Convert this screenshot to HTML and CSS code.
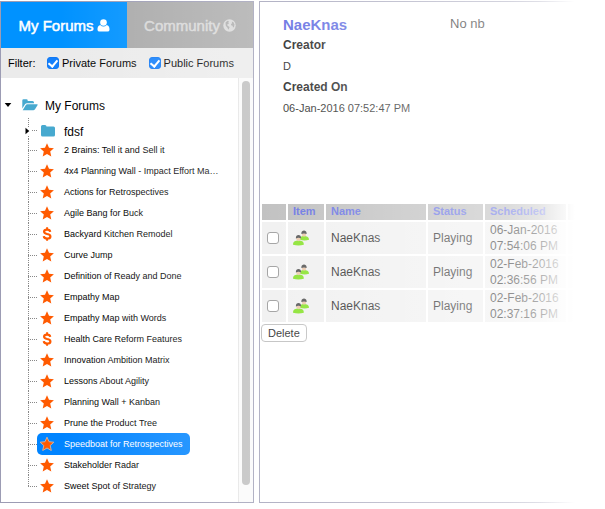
FILE: index.html
```html
<!DOCTYPE html>
<html lang="en">
<head>
<meta charset="utf-8">
<title>My Forums</title>
<link rel="stylesheet" href="styles.css">
</head>
<body>
<svg class="defs" aria-hidden="true">
  <symbol id="star" viewBox="0 0 14 14"><path d="M7 .2 9 4.700l4.900.5-3.700 3.300 1.100 5L7 11l-4.300 2.500 1.100-5L.1 5.200 5 4.700Z"/></symbol>
  <symbol id="dollar" viewBox="0 0 14 14"><path d="M10.200 4.800C10 3.300 8.800 2.600 7.100 2.600 5.300 2.600 4.100 3.400 4.100 4.700 4.100 6.200 5.600 6.600 7.200 7 9 7.400 10.400 7.900 10.400 9.400 10.400 10.800 9 11.500 7.200 11.500 5.300 11.500 3.900 10.700 3.800 9.100" fill="none" stroke="currentColor" stroke-width="2.200"/><path d="M7.100.3V2.800M7.100 11.300V13.800" stroke="currentColor" stroke-width="2"/></symbol>
  <symbol id="people" viewBox="0 0 16 16">
    <path d="M6.500 9.800C6.500 6.800 8.500 6 11 6s5 .8 5 3.800Q12 11.300 6.500 9.800Z" fill="#6fdc00"/>
    <path d="M8.700 3.500Q8.700 6.400 11 6.800 13.300 6.400 13.300 3.500Z" fill="#e8bd98"/>
    <path d="M8.400 4C7.800-.6 14.200-.6 13.600 4Q11 2.800 8.400 4Z" fill="#303030"/>
    <path d="M0 14.700C0 11.300 2.300 10.500 5.500 10.500s5.300.8 5.300 4.200Q5.500 16.300 0 14.700Z" fill="#6fdc00"/>
    <path d="M3.200 8Q3.200 10.900 5.500 11.300 7.800 10.900 7.800 8Z" fill="#e8bd98"/>
    <path d="M2.900 8.400C2.300 3.800 8.700 3.800 8.100 8.400Q5.500 7.200 2.900 8.400Z" fill="#303030"/>
  </symbol>
</svg>
<main class="app">
  <section class="forums">
    <nav class="tabs">
      <button class="tab tab-active" type="button">My Forums
        <svg class="tab-icon" viewBox="0 0 13 13" aria-hidden="true"><circle cx="6.500" cy="3.500" r="3.300"/><path d="M3.200 6Q6.500 9 9.800 6C12 6.500 12.600 8.500 12.500 11Q12.300 12.600 10.500 12.600H2.500Q.7 12.600.5 11C.4 8.500 1 6.500 3.200 6Z"/></svg>
      </button>
      <button class="tab" type="button">Community
        <svg class="tab-icon" viewBox="0 0 13 13" aria-hidden="true"><circle cx="6.500" cy="6.500" r="6.200"/><path d="M2.500 3.500 4.500 1.800 6 2.200 5.200 3.200 6 4.200 4.600 5.400 3.800 5.800 5 7 6.600 8 6.200 9.300 5.300 10.800 4.500 8.800 2.800 6.800ZM8.800 2.800l1.500.2 1.200 2.500-.5 2.500-1 .5-.4-1.700-1.500-.5-.1-1.400 1.200-.6Z" class="land"/></svg>
      </button>
    </nav>
    <form class="filter">
      <span class="filter-title">Filter:</span>
      <label class="choice"><input class="check" type="checkbox" checked>Private Forums</label>
      <label class="choice"><input class="check" type="checkbox" checked>Public Forums</label>
    </form>
    <div class="browser">
      <div class="tree">
        <div class="root">
          <svg class="caret" viewBox="0 0 8 8" aria-hidden="true"><path d="M.7 2H7.300L4 6Z"/></svg>
          <svg class="folder" viewBox="0 0 16 14" aria-hidden="true"><path d="M.3 10.500V2.500Q.3 1.300 1.500 1.300H4.500Q5.700 1.300 5.700 2.500V3H10.500Q12 3 12 4.500V5.300H5Q3.800 5.300 3 6.300ZM.7 12.300 3.700 7.200Q4.300 6.300 5.300 6.300H15.200Q16 6.300 15.500 7.200L13 11.300Q12.300 12.300 11.300 12.300Z"/></svg>
          <span>My Forums</span>
        </div>
        <ul class="branch">
          <li class="row row-folder">
            <svg class="caret caret-closed" viewBox="0 0 8 8" aria-hidden="true"><path d="M2.500.8V7.200L6.300 4Z"/></svg>
            <svg class="folder folder-closed" viewBox="0 0 16 14" aria-hidden="true"><path d="M1 2.500Q1 1 2.500 1H5Q6.500 1 6.500 2.500H13.500Q15 2.500 15 4V11Q15 12.500 13.500 12.500H2.500Q1 12.500 1 11Z"/></svg>
            <span>fdsf</span>
          </li>
          <li class="row"><a class="leaf" href="#"><svg class="mark"><use href="#star"/></svg><span class="name">2 Brains: Tell it and Sell it</span></a></li>
          <li class="row"><a class="leaf" href="#"><svg class="mark"><use href="#star"/></svg><span class="name">4x4 Planning Wall - Impact Effort Ma…</span></a></li>
          <li class="row"><a class="leaf" href="#"><svg class="mark"><use href="#star"/></svg><span class="name">Actions for Retrospectives</span></a></li>
          <li class="row"><a class="leaf" href="#"><svg class="mark"><use href="#star"/></svg><span class="name">Agile Bang for Buck</span></a></li>
          <li class="row"><a class="leaf" href="#"><svg class="mark"><use href="#dollar"/></svg><span class="name">Backyard Kitchen Remodel</span></a></li>
          <li class="row"><a class="leaf" href="#"><svg class="mark"><use href="#star"/></svg><span class="name">Curve Jump</span></a></li>
          <li class="row"><a class="leaf" href="#"><svg class="mark"><use href="#star"/></svg><span class="name">Definition of Ready and Done</span></a></li>
          <li class="row"><a class="leaf" href="#"><svg class="mark"><use href="#star"/></svg><span class="name">Empathy Map</span></a></li>
          <li class="row"><a class="leaf" href="#"><svg class="mark"><use href="#star"/></svg><span class="name">Empathy Map with Words</span></a></li>
          <li class="row"><a class="leaf" href="#"><svg class="mark"><use href="#dollar"/></svg><span class="name">Health Care Reform Features</span></a></li>
          <li class="row"><a class="leaf" href="#"><svg class="mark"><use href="#star"/></svg><span class="name">Innovation Ambition Matrix</span></a></li>
          <li class="row"><a class="leaf" href="#"><svg class="mark"><use href="#star"/></svg><span class="name">Lessons About Agility</span></a></li>
          <li class="row"><a class="leaf" href="#"><svg class="mark"><use href="#star"/></svg><span class="name">Planning Wall + Kanban</span></a></li>
          <li class="row"><a class="leaf" href="#"><svg class="mark"><use href="#star"/></svg><span class="name">Prune the Product Tree</span></a></li>
          <li class="row"><a class="leaf leaf-active" href="#"><svg class="mark"><use href="#star"/></svg><span class="name">Speedboat for Retrospectives</span></a></li>
          <li class="row"><a class="leaf" href="#"><svg class="mark"><use href="#star"/></svg><span class="name">Stakeholder Radar</span></a></li>
          <li class="row"><a class="leaf" href="#"><svg class="mark"><use href="#star"/></svg><span class="name">Sweet Spot of Strategy</span></a></li>
        </ul>
      </div>
      <div class="scrollbar" aria-hidden="true"><div class="thumb"></div></div>
    </div>
  </section>
  <section class="details">
    <div class="summary">
      <div class="facts">
        <h1 class="title">NaeKnas</h1>
        <h2 class="term">Creator</h2>
        <p class="value">D</p>
        <h2 class="term">Created On</h2>
        <p class="value">06-Jan-2016 07:52:47 PM</p>
      </div>
      <p class="note">No nb</p>
    </div>
    <table class="games">
      <colgroup><col class="c-check"><col class="c-item"><col class="c-name"><col class="c-status"><col class="c-date"><col></colgroup>
      <thead>
        <tr><th></th><th>Item</th><th>Name</th><th>Status</th><th>Scheduled</th><th></th></tr>
      </thead>
      <tbody>
        <tr><td><input class="check" type="checkbox" aria-label="Select game 1"></td><td><svg class="people"><use href="#people"/></svg></td><td>NaeKnas</td><td>Playing</td><td>06-Jan-2016 07:54:06 PM</td><td></td></tr>
        <tr><td><input class="check" type="checkbox" aria-label="Select game 2"></td><td><svg class="people"><use href="#people"/></svg></td><td>NaeKnas</td><td>Playing</td><td>02-Feb-2016 02:36:56 PM</td><td></td></tr>
        <tr><td><input class="check" type="checkbox" aria-label="Select game 3"></td><td><svg class="people"><use href="#people"/></svg></td><td>NaeKnas</td><td>Playing</td><td>02-Feb-2016 02:37:16 PM</td><td></td></tr>
      </tbody>
    </table>
    <button class="delete" type="button">Delete</button>
  </section>
</main>
</body>
</html>
```
FILE: styles.css
```css
* { box-sizing: border-box; }
body {
  margin: 0;
  background: #fff;
  color: #000;
  font-family: "Liberation Sans", Arial, sans-serif;
  font-size: 12px;
}
h1, h2, p, ul { margin: 0; padding: 0; }
button { font-family: inherit; }
.defs { display: none; }

.app {
  position: relative;
  display: grid;
  grid-template-columns: minmax(0, 254fr) minmax(0, 346fr);
  gap: 5px;
  padding-top: 1px;
}
/* White fade that grows toward the right edge of the window */
.app::after {
  content: "";
  position: absolute;
  inset: 0;
  pointer-events: none;
  background: linear-gradient(to right,
    rgba(255,255,255,0) 10%,
    rgba(255,255,255,.18) 35%,
    rgba(255,255,255,.26) 48%,
    rgba(255,255,255,.45) 71%,
    rgba(255,255,255,.56) 84%,
    rgba(255,255,255,.68) 89%,
    #fff 95%);
}
.forums { border: 1px solid #9c9cb4; }

.tabs { display: flex; }
.tab {
  flex: 1;
  display: flex;
  align-items: center;
  justify-content: center;
  gap: 3px;
  height: 46px;
  padding: 0;
  border: 0;
  background: #a9a9a9;
  color: #d8d8d8;
  font-size: 15px;
  -webkit-text-stroke: 0.5px currentColor;
}
.tab-active { background: #0092ff; color: #fff; }
.tab-icon { width: 13px; height: 13px; fill: currentColor; }
.land { fill: #a9a9a9; }

.filter {
  display: flex;
  align-items: center;
  height: 30px;
  padding-left: 7px;
  background: #ebebeb;
  font-size: 11px;
}
.filter-title { flex: none; width: 39px; }
.choice {
  display: flex;
  align-items: center;
  gap: 3px;
  margin-right: 12px;
  white-space: nowrap;
}
.check {
  appearance: none;
  flex: none;
  width: 12px;
  height: 12px;
  margin: 0;
  border: 1px solid #999;
  border-radius: 3px;
  background: #fff;
}
.check:checked {
  display: grid;
  place-items: center;
  border-color: #1179f5;
  background: #1580fb;
}
.check:checked::before {
  content: "";
  width: 4px;
  height: 7px;
  margin-bottom: 2px;
  border: solid #fff;
  border-width: 0 2px 2px 0;
  transform: rotate(40deg);
}

.browser { display: flex; }
.tree { flex: 1; min-width: 0; padding: 14px 0 6px 3px; }
.root {
  display: flex;
  align-items: center;
  height: 26px;
}
.root span { padding-top: 2px; }
.caret { width: 8px; height: 8px; margin-right: 10px; }
.folder { width: 16px; height: 14px; margin-right: 7px; fill: #47a9cf; }
.branch { margin-left: 24px; list-style: none; }
.row {
  display: flex;
  align-items: center;
  height: 21px;
  /* Dotted trunk and the short stub of each row */
  background:
    repeating-linear-gradient(to bottom, #888 0 1px, transparent 1px 2px) 0 0 / 1px 100% no-repeat,
    repeating-linear-gradient(to right, #888 0 1px, transparent 1px 2px) 0 11px / 10px 1px no-repeat;
}
.row:last-child { background-size: 1px 11px, 10px 1px; }
.row-folder {
  padding-top: 5px;
  margin-left: -5px;
  background-position: 5px 0, 9px 12px;
  background-size: 1px 100%, 6px 1px;
}
.row-folder span { padding-top: 2px; }
.caret-closed { margin-right: 9px; background: #fff; }
.folder-closed { margin-right: 8px; }
.leaf {
  display: flex;
  align-items: center;
  gap: 10px;
  height: 22px;
  margin-left: 9px;
  padding: 0 7px 0 3px;
  border-radius: 5px;
  color: #000;
  font-size: 9px;
  text-decoration: none;
  white-space: nowrap;
}
.leaf-active { background: #0084ff; color: #fff; }
.mark { width: 14px; height: 14px; fill: #ff5a00; color: #ff5a00; }
.leaf-active .mark { stroke: #cdb0a0; stroke-width: 1px; }
.scrollbar {
  width: 15px;
  padding: 3px 3px 17px 3px;
  border-left: 1px solid #e4e4e4;
  background: #fafafa;
  display: flex;
}
.thumb { flex: 1; border-radius: 4px; background: #bcbcbc; }

.details {
  overflow: hidden;
  border: solid #9c9cb4;
  border-width: 1px 0 1px 1px;
}
.summary {
  display: grid;
  grid-template-columns: 167px 1fr;
  height: 200px;
  padding: 13px 0 0 23px;
}
.title { color: #4553dc; font-size: 15px; line-height: 20px; }
.term { color: #000; font-size: 12px; line-height: 21px; }
.value { color: #000; font-size: 11px; line-height: 21px; }
.note { color: #000; font-size: 13px; line-height: 18px; }

.games {
  width: 100%;
  table-layout: fixed;
  border-spacing: 2px;
}
.c-check { width: 24px; }
.c-item { width: 36px; }
.c-name { width: 100px; }
.c-status { width: 55px; }
.c-date { width: 81px; }
.games th {
  height: 16px;
  padding: 0 5px;
  background: #b0b0b0;
  color: #4553dc;
  font-size: 11px;
  line-height: 14px;
  text-align: left;
  vertical-align: top;
}
.games td {
  height: 32px;
  padding: 0 5px;
  background: #ededed;
  color: #000;
  font-size: 12px;
  line-height: 16px;
}
.games .check { display: block; border-color: #8a8a8a; }
.people { display: block; width: 16px; height: 16px; }
.delete {
  display: block;
  height: 18px;
  margin: 0 0 0 1px;
  padding: 0 6px;
  border: 1px solid #b4b4b4;
  border-radius: 4px;
  background: #fff;
  color: #000;
  font-size: 11px;
}
```
